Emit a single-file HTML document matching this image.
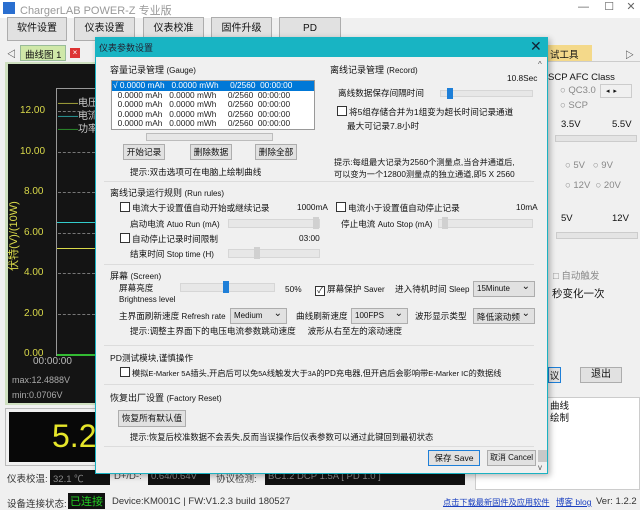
<!DOCTYPE html>
<html><head><meta charset="utf-8"><style>
*{margin:0;padding:0;box-sizing:border-box}
body{width:640px;height:509px;overflow:hidden;background:#f0f0f0;font-family:"Liberation Sans","Noto Sans CJK SC",sans-serif;font-size:10px;color:#111;position:relative}
.a{position:absolute;white-space:nowrap}
.d{font-size:8.6px}
.d .s{font-size:8px}
.btn{position:absolute;background:#e1e1e1;border:1px solid #adadad;text-align:center;font-size:8.6px;white-space:nowrap;overflow:hidden}
.cb{display:inline-block;width:10px;height:10px;border:1px solid #333;background:#fff;vertical-align:-1px;margin-right:2px}
.sl{position:absolute;height:9px;background:#e7e7e7;border:1px solid #d6d6d6}
.th{position:absolute;width:6px;height:12px;background:#d0d0d0;top:-3px}
.thb{background:#1e7fd8}
.sel{position:absolute;height:16px;background:#e1e1e1;border:1px solid #adadad;font-size:8.6px;padding:2px 3px;white-space:nowrap;overflow:hidden}
.sel:after{content:"⌄";position:absolute;right:4px;top:-1px;font-size:10px}
.sep{position:absolute;left:104px;width:430px;height:1px;background:#dcdcdc}
.blk{position:absolute;background:#111;color:#888;font-size:9.5px;padding:1px 3px;white-space:nowrap;overflow:hidden}
.yl{position:absolute;color:#d9d94a;font-size:10px;left:20px}
.dash{position:absolute;left:58px;width:37px;border-top:1px dashed #777}
</style></head><body>
<!-- main window title -->
<div class="a" style="left:0;top:0;width:640px;height:18px;background:#fff"></div>
<div class="a" style="left:3px;top:2px;width:12px;height:12px;background:#2a6fd0"></div>
<div class="a" style="left:20px;top:2px;color:#999;font-size:11px">ChargerLAB POWER-Z 专业版</div>
<div class="a" style="left:578px;top:0;color:#666;font-size:11px">—&nbsp;&nbsp;&nbsp;&nbsp;&nbsp;☐&nbsp;&nbsp;&nbsp;&nbsp;✕</div>
<!-- toolbar -->
<div class="btn" style="left:7px;top:17px;width:60px;height:24px;line-height:22px;font-size:10px">软件设置</div>
<div class="btn" style="left:74px;top:17px;width:61px;height:24px;line-height:22px;font-size:10px">仪表设置</div>
<div class="btn" style="left:143px;top:17px;width:61px;height:24px;line-height:22px;font-size:10px">仪表校准</div>
<div class="btn" style="left:211px;top:17px;width:61px;height:24px;line-height:22px;font-size:10px">固件升级</div>
<div class="btn" style="left:279px;top:17px;width:62px;height:24px;line-height:22px;font-size:10px">PD</div>
<!-- tab -->
<div class="a" style="left:7px;top:47px;font-size:9px">◁</div>
<div class="a" style="left:20px;top:45px;width:46px;height:16px;background:#cfe8a8;border:1px solid #9b9;font-size:9.5px;padding:1px 4px">曲线图 1</div>
<div class="a" style="left:70px;top:48px;width:10px;height:10px;background:#d33;color:#fff;font-size:8px;text-align:center;line-height:10px">×</div>
<!-- chart -->
<div class="a" style="left:5px;top:62px;width:92px;height:343px;background:#cfe0c0"></div>
<div class="a" style="left:8px;top:64px;width:89px;height:339px;background:#141414"></div>
<div class="a" style="left:56px;top:88px;width:1px;height:268px;background:#999"></div>
<div class="a" style="left:56px;top:88px;width:40px;height:1px;background:#999"></div>
<div class="a" style="left:58px;top:94px;color:#ccc;font-size:10px"><span style="color:#d9d94a">——</span>电压</div>
<div class="a" style="left:58px;top:107px;color:#ccc;font-size:10px"><span style="color:#3cc">——</span>电流</div>
<div class="a" style="left:58px;top:120px;color:#ccc;font-size:10px"><span style="color:#3b3">——</span>功率</div>
<div class="yl" style="top:105px">12.00</div><div class="dash" style="top:111px"></div>
<div class="yl" style="top:146px">10.00</div><div class="dash" style="top:152px"></div>
<div class="yl" style="top:186px;left:24px">8.00</div><div class="dash" style="top:192px"></div>
<div class="yl" style="top:227px;left:24px">6.00</div><div class="dash" style="top:233px"></div>
<div class="yl" style="top:267px;left:24px">4.00</div><div class="dash" style="top:273px"></div>
<div class="yl" style="top:308px;left:24px">2.00</div><div class="dash" style="top:314px"></div>
<div class="yl" style="top:348px;left:24px">0.00</div>
<div class="a" style="left:57px;top:222px;width:39px;height:1px;background:#3cc"></div>
<div class="a" style="left:57px;top:248px;width:39px;height:1px;background:#d9d94a"></div>
<div class="a" style="left:57px;top:354px;width:39px;height:2px;background:#3b3"></div>
<div class="a" style="left:33px;top:356px;color:#bbb;font-size:10px">00:00:00</div>
<div class="a" style="left:-22px;top:228px;color:#d9d94a;font-size:11px;transform:rotate(-90deg)">伏特(V)/(10W)</div>
<div class="a" style="left:12px;top:375px;color:#aaa;font-size:9px">max:12.4888V</div>
<div class="a" style="left:12px;top:390px;color:#aaa;font-size:9px">min:0.0706V</div>
<!-- big display -->
<div class="a" style="left:5px;top:408px;width:92px;height:58px;border:1px solid #bbb"></div>
<div class="a" style="left:9px;top:412px;width:88px;height:50px;background:#080808"></div>
<div class="a" style="left:52px;top:418px;color:#e6e62a;font-size:32px">5.27</div>
<!-- bottom row -->
<div class="a" style="left:7px;top:471px;font-size:9.5px;color:#333">仪表校温:</div>
<div class="blk" style="left:50px;top:470px;width:60px;height:15px">32.1 ℃</div>
<div class="a" style="left:114px;top:471px;font-size:9.5px;color:#444">D+/D-:</div>
<div class="blk" style="left:148px;top:470px;width:62px;height:15px">0.64/0.64V</div>
<div class="a" style="left:216px;top:471px;font-size:9.5px;color:#444">协议检测:</div>
<div class="blk" style="left:265px;top:470px;width:200px;height:15px">BC1.2 DCP 1.5A [ PD 1.0 ]</div>
<!-- right panel -->
<div class="a" style="left:548px;top:45px;width:44px;height:16px;background:#f4d98a;font-size:9.5px;padding:2px 0 0 2px">试工具</div>
<div class="a" style="left:625px;top:48px;font-size:9px">▷</div>
<div class="a" style="left:548px;top:61px;width:92px;height:1px;background:#ccc"></div>
<div class="a" style="left:548px;top:72px;font-size:9.5px">SCP AFC Class</div>
<div class="a" style="left:560px;top:85px;font-size:9.5px;color:#888">○ QC3.0</div>
<div class="a" style="left:600px;top:84px;width:32px;height:14px;border:1px solid #ccc;font-size:7px;padding:2px 5px">◂ &nbsp;▸</div>
<div class="a" style="left:560px;top:100px;font-size:9.5px;color:#888">○ SCP</div>
<div class="a" style="left:561px;top:119px;font-size:9.5px">3.5V</div>
<div class="a" style="left:612px;top:119px;font-size:9.5px">5.5V</div>
<div class="a" style="left:555px;top:135px;width:82px;height:7px;background:#e4e4e4;border:1px solid #ccc"></div>
<div class="a" style="left:565px;top:160px;font-size:9.5px;color:#888">○ 5V&nbsp;&nbsp; ○ 9V</div>
<div class="a" style="left:565px;top:180px;font-size:9.5px;color:#888">○ 12V&nbsp; ○ 20V</div>
<div class="a" style="left:561px;top:213px;font-size:9.5px">5V</div>
<div class="a" style="left:612px;top:213px;font-size:9.5px">12V</div>
<div class="a" style="left:556px;top:232px;width:82px;height:7px;background:#e4e4e4;border:1px solid #ccc"></div>
<div class="a" style="left:553px;top:268px;font-size:9.5px;color:#888">□ 自动触发</div>
<div class="a" style="left:552px;top:286px;font-size:10.5px">秒变化一次</div>
<div class="btn" style="left:548px;top:367px;width:13px;height:16px;border-color:#1e7fd8;font-size:9.5px">议</div>
<div class="btn" style="left:580px;top:367px;width:42px;height:16px;font-size:10px;line-height:14px">退出</div>
<div class="a" style="left:475px;top:397px;width:165px;height:93px;background:#fff;border:1px solid #ccc"></div>
<div class="a" style="left:550px;top:401px;font-size:9.5px;line-height:12px">曲线<br>绘制</div>
<!-- status -->
<div class="a" style="left:7px;top:496px;font-size:9.5px;color:#333">设备连接状态:</div>
<div class="a" style="left:68px;top:493px;width:37px;height:16px;background:#111;color:#2c2;font-size:11px;padding-left:2px;white-space:nowrap;overflow:hidden">已连接</div>
<div class="a" style="left:112px;top:496px;font-size:9.5px;color:#333">Device:KM001C | FW:V1.2.3 build 180527</div>
<div class="a" style="left:443px;top:496px;font-size:8.2px;color:#1a3fc0;text-decoration:underline">点击下载最新固件及应用软件</div>
<div class="a" style="left:556px;top:496px;font-size:8.5px;color:#1a3fc0;text-decoration:underline">博客 blog</div>
<div class="a" style="left:596px;top:496px;font-size:9.5px;color:#333">Ver: 1.2.2</div>

<!-- DIALOG -->
<div class="a" style="left:95px;top:37px;width:453px;height:437px;background:#f0f0f0;border:1px solid #1ab2c2;box-shadow:2px 2px 6px rgba(0,0,0,.3)"></div>
<div class="a" style="left:95px;top:37px;width:453px;height:20px;background:#18b4c3"></div>
<div class="a" style="left:99px;top:41px;font-size:9px;color:#223">仪表参数设置</div>
<div class="a" style="left:530px;top:38px;font-size:14px;color:#123">✕</div>
<!-- scrollbar -->
<div class="a" style="left:537px;top:57px;width:10px;height:416px;background:#f0f0f0"></div>
<div class="a" style="left:538px;top:60px;font-size:8px;color:#555">^</div>
<div class="a" style="left:538px;top:450px;width:9px;height:12px;background:#c8c8c8"></div>
<div class="a" style="left:538px;top:463px;font-size:8px;color:#555">v</div>
<div class="d">
<!-- Gauge -->
<div class="a" style="left:110px;top:63px;font-size:9px">容量记录管理 <span class="s">(Gauge)</span></div>
<div class="a" style="left:111px;top:80px;width:204px;height:50px;background:#fff;border:1px solid #999"></div>
<div class="a" style="left:112px;top:81px;width:202px;height:10px;background:#0078d7"></div>
<div class="a" style="left:113px;top:81px;font-size:8.3px;line-height:9.5px;color:#222"><span style="color:#fff">√ 0.0000 mAh&nbsp;&nbsp; 0.0000 mWh&nbsp;&nbsp;&nbsp;&nbsp; 0/2560&nbsp; 00:00:00</span><br>&nbsp;&nbsp;0.0000 mAh&nbsp;&nbsp; 0.0000 mWh&nbsp;&nbsp;&nbsp;&nbsp; 0/2560&nbsp; 00:00:00<br>&nbsp;&nbsp;0.0000 mAh&nbsp;&nbsp; 0.0000 mWh&nbsp;&nbsp;&nbsp;&nbsp; 0/2560&nbsp; 00:00:00<br>&nbsp;&nbsp;0.0000 mAh&nbsp;&nbsp; 0.0000 mWh&nbsp;&nbsp;&nbsp;&nbsp; 0/2560&nbsp; 00:00:00<br>&nbsp;&nbsp;0.0000 mAh&nbsp;&nbsp; 0.0000 mWh&nbsp;&nbsp;&nbsp;&nbsp; 0/2560&nbsp; 00:00:00</div>
<div class="a" style="left:146px;top:133px;width:127px;height:8px;background:#e6e6e6;border:1px solid #bcbcbc"></div>
<div class="btn" style="left:123px;top:144px;width:42px;height:16px;line-height:14px">开始记录</div>
<div class="btn" style="left:190px;top:144px;width:42px;height:16px;line-height:14px">删除数据</div>
<div class="btn" style="left:255px;top:144px;width:42px;height:16px;line-height:14px">删除全部</div>
<div class="a" style="left:130px;top:166px">提示:双击选项可在电脑上绘制曲线</div>
<!-- Record -->
<div class="a" style="left:330px;top:63px;font-size:9px">离线记录管理 <span class="s">(Record)</span></div>
<div class="a" style="left:507px;top:73px;font-size:8.3px">10.8Sec</div>
<div class="a" style="left:338px;top:87px">离线数据保存间隔时间</div>
<div class="sl" style="left:440px;top:90px;width:93px;height:7px"><div class="th thb" style="left:6px;top:-3px;height:11px"></div></div>
<div class="a" style="left:337px;top:106px"><span class="cb"></span>将5组存储合并为1组变为超长时间记录通道</div>
<div class="a" style="left:347px;top:120px">最大可记录7.8小时</div>
<div class="a" style="left:334px;top:157px;font-size:8.2px;line-height:12px">提示:每组最大记录为2560个测量点,当合并通道后,<br>可以变为一个12800测量点的独立通道,即5 X 2560</div>
<div class="sep" style="top:181px"></div>
<!-- Run rules -->
<div class="a" style="left:110px;top:186px;font-size:9px">离线记录运行规则 <span class="s">(Run rules)</span></div>
<div class="a" style="left:120px;top:202px"><span class="cb"></span>电流大于设置值自动开始或继续记录</div>
<div class="a" style="left:297px;top:202px;font-size:8.3px">1000mA</div>
<div class="a" style="left:130px;top:218px">启动电流 <span class="s">Atuo Run (mA)</span></div>
<div class="sl" style="left:228px;top:219px;width:92px"><div class="th" style="left:84px"></div></div>
<div class="a" style="left:336px;top:202px"><span class="cb"></span>电流小于设置值自动停止记录</div>
<div class="a" style="left:516px;top:202px;font-size:8.3px">10mA</div>
<div class="a" style="left:341px;top:218px">停止电流 <span class="s">Auto Stop (mA)</span></div>
<div class="sl" style="left:438px;top:219px;width:95px"><div class="th" style="left:3px"></div></div>
<div class="a" style="left:120px;top:233px"><span class="cb"></span>自动停止记录时间限制</div>
<div class="a" style="left:299px;top:233px;font-size:8.3px">03:00</div>
<div class="a" style="left:130px;top:248px">结束时间 <span class="s">Stop time (H)</span></div>
<div class="sl" style="left:228px;top:249px;width:92px"><div class="th" style="left:25px"></div></div>
<div class="sep" style="top:264px"></div>
<!-- Screen -->
<div class="a" style="left:110px;top:269px;font-size:9px">屏幕 <span class="s">(Screen)</span></div>
<div class="a" style="left:119px;top:283px;line-height:11px">屏幕亮度<br><span class="s">Brightness level</span></div>
<div class="sl" style="left:180px;top:283px;width:95px"><div class="th thb" style="left:42px"></div></div>
<div class="a" style="left:285px;top:284px;font-size:8.3px">50%</div>
<div class="a" style="left:315px;top:283px"><span class="cb" style="text-align:center;font-size:8px;line-height:8px">✓</span>屏幕保护 <span class="s">Saver</span></div>
<div class="a" style="left:395px;top:283px">进入待机时间 <span class="s">Sleep</span></div>
<div class="sel" style="left:473px;top:281px;width:62px;font-size:8px">15Minute</div>
<div class="a" style="left:119px;top:310px">主界面刷新速度 <span class="s">Refresh rate</span></div>
<div class="sel" style="left:230px;top:308px;width:57px;font-size:8px">Medium</div>
<div class="a" style="left:296px;top:310px">曲线刷新速度</div>
<div class="sel" style="left:351px;top:308px;width:57px;font-size:8px">100FPS</div>
<div class="a" style="left:415px;top:310px">波形显示类型</div>
<div class="sel" style="left:473px;top:308px;width:62px">降低滚动频</div>
<div class="a" style="left:130px;top:325px">提示:调整主界面下的电压电流参数跳动速度&nbsp;&nbsp;&nbsp;&nbsp;&nbsp;波形从右至左的滚动速度</div>
<div class="sep" style="top:345px"></div>
<!-- PD -->
<div class="a" style="left:110px;top:352px">PD测试模块,谨慎操作</div>
<div class="a" style="left:120px;top:367px;font-size:8.2px"><span class="cb"></span>模拟<span style="font-size:7.5px">E-Marker 5A</span>插头,开启后可以免<span style="font-size:7px">5A</span>线触发大于<span style="font-size:7px">3A</span>的PD充电器,但开启后会影响带<span style="font-size:7.5px">E-Marker IC</span>的数据线</div>
<div class="sep" style="top:384px"></div>
<!-- Factory -->
<div class="a" style="left:110px;top:391px;font-size:9px">恢复出厂设置 <span class="s">(Factory Reset)</span></div>
<div class="btn" style="left:118px;top:410px;width:68px;height:17px;line-height:15px">恢复所有默认值</div>
<div class="a" style="left:130px;top:431px;font-size:8.3px">提示:恢复后校准数据不会丢失,反而当误操作后仪表参数可以通过此键回到最初状态</div>
<div class="sep" style="top:446px"></div>
<div class="btn" style="left:428px;top:450px;width:52px;height:16px;line-height:14px;border-color:#1e7fd8">保存 Save</div>
<div class="btn" style="left:487px;top:450px;width:49px;height:16px;line-height:14px;font-size:8px">取消 Cancel</div>
</div>
</body></html>
